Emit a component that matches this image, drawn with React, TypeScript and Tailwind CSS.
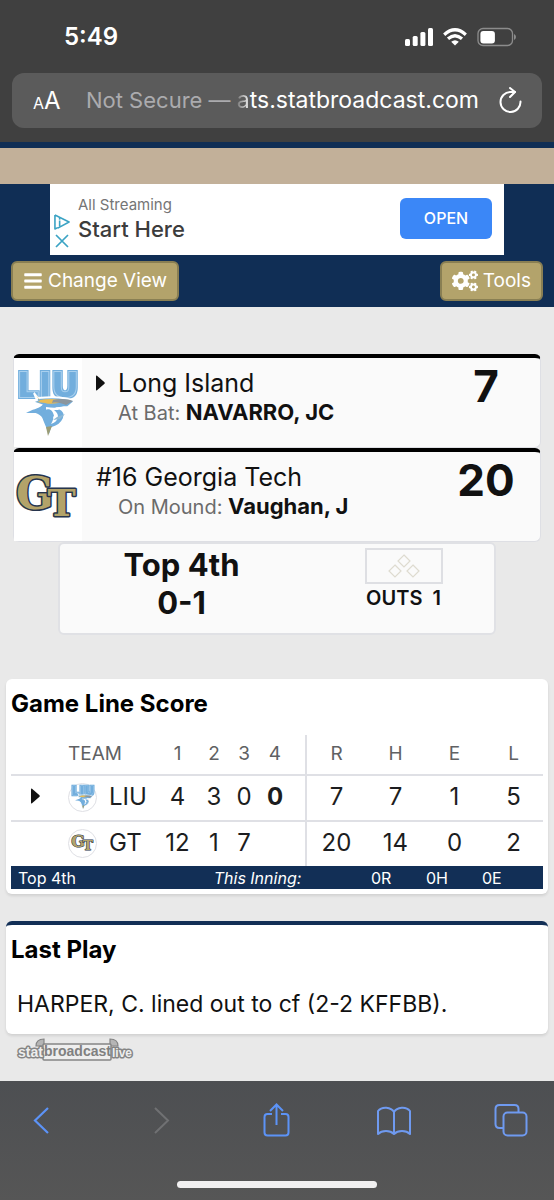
import React from 'react';
import { FaBars, FaCogs } from 'react-icons/fa';

interface LineRow {
    team: string;
    batting: boolean;
    innings: string[];
    totals: string[];
    logo: React.ReactNode;
}

const LiuLogo: React.FC<{ className: string }> = ({ className }) => (
    <svg viewBox="0 0 66 72" className={`overflow-visible ${className}`} role="img" aria-label="Long Island logo">
        <defs>
            <filter id="liu-outline">
                <feMorphology in="SourceAlpha" operator="dilate" radius="1.4" result="wide" />
                <feFlood floodColor="#72aedd" />
                <feComposite in2="wide" operator="in" result="edge" />
                <feMerge>
                    <feMergeNode in="edge" />
                    <feMergeNode in="SourceGraphic" />
                </feMerge>
            </filter>
        </defs>
        <text
            x="33" y="30" textAnchor="middle" fontFamily="DejaVu Sans, sans-serif" fontWeight="700" fontSize="34"
            fill="#72aedd" stroke="#a9d0ee" strokeWidth="2" paintOrder="stroke" filter="url(#liu-outline)"
        >
            LIU
        </text>
        <path d="M19 26 23 31C32 30 48 29 60 34L53 40 44 41C55 46 48 58 37 61L34 70 27 53C26 48 21 46 11 45 19 43 22 42 26 38L17 35 22 33Z" fill="#72aedd" stroke="#fff" strokeWidth="2" />
        <path d="M21 28 25 33C34 31 44 32 51 34 44 36 36 38 30 36L22 35 25 34Z" fill="#e9bd55" />
        <path d="M38 33C46 31 54 32 58 34L51 38C46 36 42 35 37 36Z" fill="#8b969e" />
        <path d="M31 40C38 41 43 41 51 39L43 43 39 43C46 48 43 55 36 57 40 51 39 47 31 44Z" fill="#fff" />
        <path d="M30 43C35 41 38 44 39 49L34 54C33 49 31 46 26 45Z" fill="#72aedd" />
        <path d="M11 46C18 42 22 42 27 39L30 42 24 46Z" fill="#72aedd" />
        <path d="M42 50 50 47 45 52 38 53Z" fill="#8fb9d5" />
        <path d="M31 60 37 59 33 69Z" fill="#9a9c76" />
    </svg>
);

const GtLogo: React.FC<{ className: string }> = ({ className }) => (
    <svg viewBox="0 0 66 44" className={`overflow-visible ${className}`} role="img" aria-label="Georgia Tech logo">
        <text
            x="1" y="34" fontFamily="DejaVu Serif, serif" fontWeight="700" fontSize="44"
            fill="#b3a369" stroke="#26344d" strokeWidth="3" strokeLinejoin="round" paintOrder="stroke"
        >
            G<tspan dx="-6" dy="7" fontSize="38">T</tspan>
        </text>
    </svg>
);

const LINE_SCORE: LineRow[] = [
    {
        team: 'LIU',
        batting: true,
        innings: ['4', '3', '0', '0'],
        totals: ['7', '7', '1', '5'],
        logo: <LiuLogo className="h-[26px] w-[24px]" />,
    },
    {
        team: 'GT',
        batting: false,
        innings: ['12', '1', '7', ''],
        totals: ['20', '14', '0', '2'],
        logo: <GtLogo className="h-4 w-6" />,
    },
];

const Caret: React.FC = () => (
    <svg viewBox="0 0 9 16" className="h-4 w-[9px] shrink-0" aria-hidden="true">
        <path d="M0 1.2Q0 0 1 .8L8.5 7.3Q9 8 8.5 8.7L1 15.2Q0 16 0 14.8Z" fill="#111" />
    </svg>
);

const StatusBar: React.FC = () => (
    <div className="flex h-[73px] items-center justify-between pr-[37px] pl-16 text-2xl font-semibold text-white">
        <span>5:49</span>
        <div className="flex items-center gap-[10px]">
            <svg viewBox="0 0 28 18" className="h-[18px] w-7" fill="#fff">
                <rect x="0" y="11" width="5" height="7" rx="1.5" />
                <rect x="7.7" y="8" width="5" height="10" rx="1.5" />
                <rect x="15.4" y="4" width="5" height="14" rx="1.5" />
                <rect x="23" y="0" width="5" height="18" rx="1.5" />
            </svg>
            <svg viewBox="0 0 24 18" className="h-[18px] w-6" fill="none" stroke="#fff" strokeWidth="3.2">
                <path d="M1.2 6.7Q12-3.2 22.8 6.7" />
                <path d="M5 10.8Q12 4.7 19 10.8" />
                <path d="M12 17.6 8.2 13.8Q12 10.8 15.8 13.8Z" fill="#fff" stroke="none" />
            </svg>
            <svg viewBox="0 0 40 20" className="h-5 w-10">
                <rect x="1" y="1.5" width="34.500" height="17" rx="5" fill="none" stroke="#8c8c8c" strokeWidth="1.3" />
                <rect x="3.400" y="4" width="14.500" height="12.500" rx="3" fill="#fff" />
                <path d="M37 7v6q2-1 2-3t-2-3Z" fill="#8c8c8c" />
            </svg>
        </div>
    </div>
);

const AddressBar: React.FC = () => (
    <div className="mx-3 flex h-[55px] items-center rounded-xl bg-[#5b5b5b] pr-5 pl-[21px] text-white">
        <button aria-label="Page settings" className="flex items-baseline">
            <span className="text-base">A</span>
            <span className="text-2xl">A</span>
        </button>
        <a href="#" className="flex-1 text-right text-[23px] whitespace-nowrap">
            <span className="text-[22px] text-[#ababae]">Not Secure — </span>
            <span className="bg-linear-to-r from-[#777] to-white bg-clip-text text-transparent">a</span>ts.statbroadcast.com
        </a>
        <button aria-label="Reload" className="ml-5">
            <svg viewBox="0 0 23 27" className="h-[27px] w-[23px]" fill="none" stroke="#fff" strokeWidth="2" strokeLinecap="round" strokeLinejoin="round">
                <path d="M21.500 14.500A10 10 0 1 1 11.500 5H16" />
                <path d="m11 1 5 4-5 5" />
            </svg>
        </button>
    </div>
);

const AdBanner: React.FC = () => (
    <div className="mx-[50px] flex h-[71px] items-center justify-between bg-white pr-3 pb-[2px] pl-1">
        <div className="flex items-center gap-2">
            <div className="flex flex-col items-center gap-1 pt-6">
                <svg viewBox="0 0 17 17" className="size-4" fill="none" stroke="#3ba3c4" strokeWidth="1.700">
                    <path d="M1 1 16 8.500 4 15M1 1v15l3-1.500M6 7v6" strokeLinejoin="round" />
                    <path d="M6 4v2" />
                </svg>
                <svg viewBox="0 0 14 14" className="size-[14px]" stroke="#3ba3c4" strokeWidth="1.700">
                    <path d="M1 1l12 12M13 1 1 13" />
                </svg>
            </div>
            <div>
                <p className="text-[15px] leading-5 text-[#757575]">All Streaming</p>
                <p className="text-[22px] leading-7 font-medium text-[#3c3c3c]">Start Here</p>
            </div>
        </div>
        <button className="h-[41px] w-[92px] rounded-md bg-[#3b87f7] pb-[2px] text-base font-medium text-white">OPEN</button>
    </div>
);

interface TeamCardProps {
    name: string;
    role: string;
    player: string;
    score: string;
    logo: React.ReactNode;
    batting?: boolean;
}

const TeamCard: React.FC<TeamCardProps> = ({ name, role, player, score, logo, batting }) => (
    <section className="flex h-[94px] rounded-md border border-t-4 border-[#dedfe4] border-t-black bg-[#fafafa]">
        <div className="flex w-[68px] shrink-0 items-center justify-center bg-white">{logo}</div>
        <div className="flex-1 pt-2 pl-[14px]">
            <h2 className="flex items-center text-[25px] leading-[34px] text-[#111]">
                {batting && <span className="mr-[13px]"><Caret /></span>}
                {name}
            </h2>
            <p className="pl-[22px] text-xl leading-6 text-[#6b6b6b]">
                {role}: <b className="text-[22px] font-bold text-[#111]">{player}</b>
            </p>
        </div>
        <div className="w-[108px] pt-[2px] text-center text-[44px] leading-[52px] font-bold text-[#111]">{score}</div>
    </section>
);

const GameState: React.FC = () => (
    <section className="mx-[45px] flex h-[93px] rounded-md border-2 border-[#e0e1e5] bg-[#fafafa] text-[#111]">
        <div className="w-[56%] pt-[2px] text-center text-[31px] leading-[38px] font-bold">
            <p>Top 4th</p>
            <p>0-1</p>
        </div>
        <div className="flex flex-1 flex-col items-center pt-1 pl-[10px]">
            <div className="flex h-9 w-[78px] items-center justify-center border-2 border-[#dedfe3]">
                <svg viewBox="0 0 32 24" className="h-6 w-8" fill="none" stroke="#dedbd0" strokeWidth="1.200" aria-label="Bases empty">
                    <path d="m16 1 6 6-6 6-6-6ZM7 11l6 6-6 6-6-6ZM25 11l6 6-6 6-6-6Z" />
                </svg>
            </div>
            <p className="text-xl leading-7 font-semibold whitespace-pre">OUTS  1</p>
        </div>
    </section>
);

const LineScore: React.FC = () => (
    <section className="rounded-md bg-white px-[5px] pb-[5px] shadow-[0_2px_3px_rgba(0,0,0,0.1)]">
        <h2 className="h-14 pt-[5px] text-2xl leading-[40px] font-bold text-black">Game Line Score</h2>
        <table className="w-full table-fixed text-center text-2xl text-[#1c1d20]">
            <colgroup>
                <col className="w-[57px]" />
                <col className="w-[88px]" />
                <col className="w-[43px]" />
                <col className="w-[30px]" />
                <col className="w-[30px]" />
                <col className="w-[47px]" />
                <col className="w-[60px]" />
                <col className="w-[59px]" />
                <col className="w-[59px]" />
                <col className="w-[59px]" />
            </colgroup>
            <thead>
                <tr className="h-10 border-b-2 border-[#dfe0e5] text-[19px] text-[#606163]">
                    <th aria-label="At bat"></th>
                    <th className="pb-[2px] text-left font-normal">TEAM</th>
                    <th className="pb-[2px] font-normal">1</th>
                    <th className="pb-[2px] font-normal">2</th>
                    <th className="pb-[2px] font-normal">3</th>
                    <th className="border-r-2 border-[#dfe0e5] pr-[14px] pb-[2px] font-normal">4</th>
                    <th className="pb-[2px] font-normal">R</th>
                    <th className="pb-[2px] font-normal">H</th>
                    <th className="pb-[2px] font-normal">E</th>
                    <th className="pb-[2px] font-normal">L</th>
                </tr>
            </thead>
            <tbody>
                {LINE_SCORE.map((row) => (
                    <tr key={row.team} className={row.batting ? 'h-[46px] border-b-2 border-[#dfe0e5]' : 'h-[45px]'}>
                        <td>
                            <div className="-mt-1 flex justify-center pr-2">{row.batting && <Caret />}</div>
                        </td>
                        <td className="pb-[2px]">
                            <div className="flex items-center gap-3">
                                <span className="flex size-[29px] shrink-0 items-center justify-center rounded-full border border-[#dfe0e5]">
                                    {row.logo}
                                </span>
                                {row.team}
                            </div>
                        </td>
                        {row.innings.map((runs, i) => (
                            <td key={i} className={i === 3 ? 'border-r-2 border-[#dfe0e5] pr-[14px] pb-[2px] font-bold' : 'pb-[2px]'}>{runs}</td>
                        ))}
                        {row.totals.map((total, i) => (
                            <td key={i} className="pb-[2px]">{total}</td>
                        ))}
                    </tr>
                ))}
            </tbody>
        </table>
        <div className="flex h-[23px] items-center bg-[#122f56] px-[7px] text-base text-white">
            <span>Top 4th</span>
            <i className="flex-1 pl-[68px] text-center">This Inning:</i>
            <span className="w-[55px]">0R</span>
            <span className="w-[56px]">0H</span>
            <span className="w-[54px]">0E</span>
        </div>
    </section>
);

const LastPlay: React.FC = () => (
    <section className="mt-[27px] h-[113px] rounded-md border-t-4 border-[#122f56] bg-white px-[5px] shadow-[0_2px_3px_rgba(0,0,0,0.1)]">
        <h2 className="pt-[5px] text-2xl leading-[40px] font-bold text-black">Last Play</h2>
        <p className="px-[6px] pt-[14px] text-[23px] leading-10 text-[#111]">HARPER, C. lined out to cf (2-2 KFFBB).</p>
    </section>
);

const StatBroadcastLogo: React.FC = () => (
    <svg viewBox="0 0 116 24" className="mt-1 ml-[10px] h-6 w-[116px] overflow-visible" role="img" aria-label="StatBroadcast Live">
        <path d="M20 8Q20 1 28 1V8ZM94 1Q102 1 102 8H94Z" fill="#b5b5b5" stroke="#858585" strokeWidth="1.200" />
        <rect x="27" y="6" width="68" height="16" rx="1" fill="#eee" stroke="#858585" strokeWidth="1.500" />
        <g fontFamily="Liberation Sans, sans-serif" fontWeight="700">
            <text x="2" y="19" fontSize="14" fill="#eee" stroke="#858585" strokeWidth="3" strokeLinejoin="round" paintOrder="stroke">stat</text>
            <text x="28" y="18" fontSize="14" fill="#808080">broadcast</text>
            <text x="96" y="19" fontSize="12" fill="#eee" stroke="#858585" strokeWidth="3" strokeLinejoin="round" paintOrder="stroke">live</text>
        </g>
    </svg>
);

const BrowserToolbar: React.FC = () => (
    <nav className="flex h-[120px] flex-col bg-linear-to-b from-[#4d4f52] to-[#565656]">
        <div className="flex h-[78px] items-center justify-between pr-[25px] pl-[23px]">
            <button aria-label="Back" className="flex w-9 justify-center">
                <svg viewBox="0 0 30 34" className="h-[34px] w-[30px]" fill="none" stroke="#5c93f7" strokeWidth="2.200">
                    <path d="M22 5 9 17.500 22 30" />
                </svg>
            </button>
            <button aria-label="Forward" className="flex w-9 justify-center">
                <svg viewBox="0 0 30 34" className="h-[34px] w-[30px]" fill="none" stroke="#707173" strokeWidth="2">
                    <path d="M11 5 24 17.500 11 30" />
                </svg>
            </button>
            <button aria-label="Share" className="flex w-9 justify-center">
                <svg viewBox="0 0 30 34" className="h-[34px] w-[30px]" fill="none" stroke="#5c93f7" strokeWidth="2">
                    <path d="M11 11H6.500Q3.500 11 3.500 14V29.500Q3.500 32.500 6.500 32.500H24.500Q27.500 32.500 27.500 29.500V14Q27.500 11 24.500 11H20" />
                    <path d="M15.500 22V2M9 8 15.500 1.500 22 8" />
                </svg>
            </button>
            <button aria-label="Bookmarks" className="flex w-9 justify-center">
                <svg viewBox="0 0 36 34" className="h-[34px] w-9" fill="none" stroke="#6f9af0" strokeWidth="2" strokeLinejoin="round">
                    <path d="M18 9C15 4 6 3 2 8V31C6 27 14 27 18 31C22 27 30 27 34 31V8C30 3 21 4 18 9ZM18 9V31" />
                </svg>
            </button>
            <button aria-label="Tabs" className="flex w-9 justify-center">
                <svg viewBox="0 0 34 34" className="size-[34px]" fill="none" stroke="#6f9af0" strokeWidth="2">
                    <rect x="9.500" y="9.500" width="23" height="23" rx="4" />
                    <path d="M9.500 25H5.500Q1.500 25 1.500 21V6Q1.500 2 5.500 2H20.500Q24.500 2 24.500 6V9.500" />
                </svg>
            </button>
        </div>
        <div className="mx-auto mt-[22px] h-[7px] w-[36%] rounded-full bg-[#f1f0f1]"></div>
    </nav>
);

export default function App() {
    return (
        <div className="min-h-screen overflow-hidden bg-[#e9e9e9] font-['Inter','Liberation_Sans',sans-serif]">
            <div className="h-[142px] bg-[#404040]">
                <StatusBar />
                <AddressBar />
            </div>

            <header className="bg-[#102e55] pt-[6px] pb-[6px]">
                <div className="h-9 bg-[#c2b099]"></div>
                <AdBanner />
                <div className="flex justify-between px-[11px] pt-[6px] text-[19px] text-white">
                    <button className="flex h-10 items-center gap-[5px] rounded-md border-2 border-[#897f53] bg-[#b3a36b] px-[10px]">
                        <FaBars className="size-5" /> Change View
                    </button>
                    <button className="flex h-10 items-center gap-[5px] rounded-md border-2 border-[#897f53] bg-[#b3a36b] px-[10px]">
                        <FaCogs className="size-[26px]" /> Tools
                    </button>
                </div>
            </header>

            <main className="px-[6px] pt-[47px] pb-[19px]">
                <div className="mx-[7px]">
                    <TeamCard
                        name="Long Island"
                        role="At Bat"
                        player="NAVARRO, JC"
                        score="7"
                        logo={<LiuLogo className="h-[72px] w-[66px]" />}
                        batting
                    />
                    <TeamCard
                        name="#16 Georgia Tech"
                        role="On Mound"
                        player="Vaughan, J"
                        score="20"
                        logo={<GtLogo className="h-11 w-[66px]" />}
                    />
                    <GameState />
                </div>
                <div className="mt-11">
                    <LineScore />
                    <LastPlay />
                    <StatBroadcastLogo />
                </div>
            </main>

            <BrowserToolbar />
        </div>
    );
}
